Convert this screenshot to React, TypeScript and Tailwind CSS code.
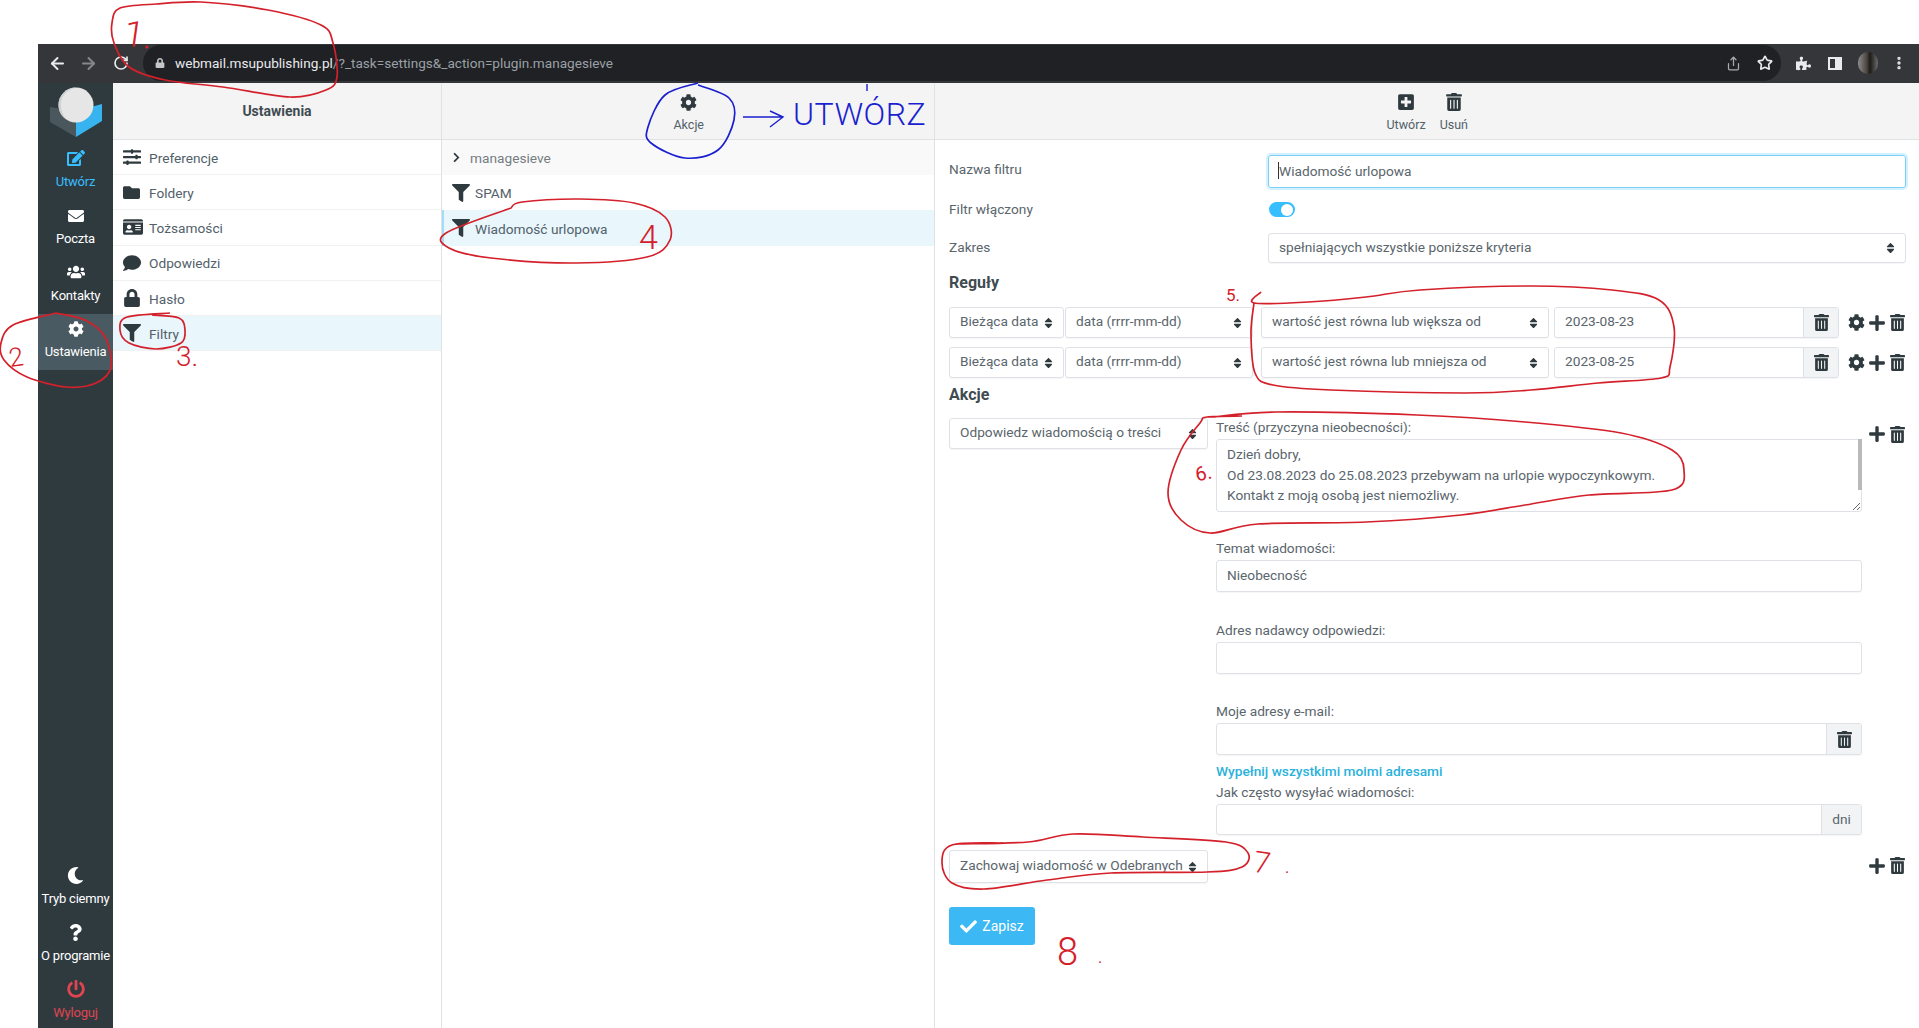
import React from 'react';
import { ArrowLeft, ArrowRight, RotateCw, Star, Share, EllipsisVertical } from 'lucide-react';
import {
  FaEdit, FaEnvelope, FaUsers, FaCog, FaMoon, FaQuestion, FaPowerOff, FaSlidersH, FaFolder, FaIdCard,
  FaComment, FaLock, FaFilter, FaChevronRight, FaPlusSquare, FaTrashAlt, FaPlus, FaCheck, FaSort, FaPuzzlePiece,
} from 'react-icons/fa';

type Pt = [number, number];

// smooth closed-ish pen stroke through hand picked points
const pen = (pts: Pt[]) => {
  let d = `M${pts[0][0]} ${pts[0][1]}`;
  for (let i = 0; i < pts.length - 1; i++) {
    const p0 = pts[Math.max(i - 1, 0)];
    const p1 = pts[i];
    const p2 = pts[i + 1];
    const p3 = pts[Math.min(i + 2, pts.length - 1)];
    d += ` C${p1[0] + (p2[0] - p0[0]) / 6} ${p1[1] + (p2[1] - p0[1]) / 6} ${p2[0] - (p3[0] - p1[0]) / 6} ${p2[1] - (p3[1] - p1[1]) / 6} ${p2[0]} ${p2[1]}`;
  }
  return d;
};

const redLoops: Pt[][] = [
  [[156, 4], [201, 2], [268, 10], [321, 25], [333, 43], [337, 77], [326, 90], [290, 97], [223, 87], [165, 80], [129, 67], [114, 43], [112, 23], [120, 8], [156, 4]],
  [[56, 313], [85, 320], [105, 337], [111, 367], [96, 383], [67, 387], [27, 377], [4, 360], [1, 343], [13, 325], [56, 313]],
  [[170, 313], [127, 317], [120, 330], [129, 343], [156, 349], [181, 343], [185, 330], [179, 318], [152, 315]],
  [[511, 208], [446, 233], [449, 248], [491, 258], [576, 263], [647, 257], [670, 240], [665, 217], [634, 203], [580, 199], [522, 202], [511, 208]],
  [[1261, 292], [1254, 303], [1308, 302], [1366, 297], [1420, 290], [1531, 286], [1612, 290], [1659, 300], [1674, 327], [1670, 367], [1661, 378], [1598, 383], [1531, 390], [1465, 393], [1331, 390], [1273, 385], [1255, 373], [1251, 333], [1254, 303]],
  [[1242, 416], [1207, 417], [1200, 423], [1181, 450], [1168, 493], [1181, 520], [1210, 533], [1258, 524], [1366, 522], [1461, 515], [1525, 505], [1589, 495], [1672, 490], [1684, 470], [1672, 450], [1621, 433], [1525, 422], [1417, 415], [1277, 412], [1213, 417]],
  [[1003, 843], [952, 845], [942, 863], [952, 883], [984, 889], [1047, 880], [1111, 873], [1207, 872], [1242, 867], [1248, 853], [1226, 842], [1143, 837], [1073, 834], [1028, 842], [958, 844]],
];

const blueCircle: Pt[] = [[698, 83], [665, 95], [648, 127], [651, 143], [685, 158], [718, 150], [734, 120], [729, 98], [698, 85]];

const Notes = () => (
  <div className="absolute inset-0 pointer-events-none">
    <svg width="1919" height="1028" className="absolute inset-0" fill="none">
      {redLoops.map((l, i) => (
        <path key={i} d={pen(l)} stroke="#d4202a" strokeWidth="1.7" />
      ))}
      <path d={pen(blueCircle)} stroke="#1a1fd0" strokeWidth="1.7" />
      <path d="M743 117H783M770 111L783 117L770 127M867 84V91" stroke="#1a1fd0" strokeWidth="1.4" />
    </svg>
    <span className="absolute left-[124px] top-[8px] text-[36px] font-light text-[#d4202a] rotate-[8deg]">1.</span>
    <span className="absolute left-[9px] top-[338px] text-[26px] font-light text-[#d4202a] rotate-[-8deg]">2</span>
    <span className="absolute left-[176px] top-[336px] text-[28px] font-light text-[#d4202a]">3.</span>
    <span className="absolute left-[639px] top-[212px] text-[34px] font-light text-[#d4202a]">4</span>
    <span className="absolute left-[1226px] top-[283px] text-[17px] text-[#d4202a]">5.</span>
    <span className="absolute left-[1195px] top-[458px] text-[20px] text-[#d4202a] rotate-[-12deg]">6.</span>
    <span className="absolute left-[1254px] top-[840px] text-[30px] font-light text-[#d4202a] rotate-[8deg]">7</span>
    <span className="absolute left-[1285px] top-[856px] text-[16px] text-[#d4202a]">.</span>
    <span className="absolute left-[1057px] top-[924px] text-[38px] font-light text-[#d4202a]">8</span>
    <span className="absolute left-[1098px] top-[946px] text-[16px] text-[#d4202a]">.</span>
    <span className="absolute left-[793px] top-[94px] text-[32px] leading-[40px] font-light tracking-[0.5px] text-[#1a1fd0]">UTWÓRZ</span>
  </div>
);

const Logo = () => (
  <svg width="52" height="51" viewBox="0 0 52 51">
    <path d="M0 20V35L26 50V24Z" fill="#4a585e" />
    <path d="M52 17V34L26 50V24Z" fill="#37b4f0" />
    <circle cx="26" cy="18" r="17.5" fill="#e6e6e6" />
    <path d="M26 .5A17.5 17.5 0 0 0 17 33C12 27 11 22 11 17C11 10 16 3 26 .5Z" fill="#cfd2d2" />
  </svg>
);

const NavItem = ({ icon, label, active, color, className = '' }: { icon: React.ReactNode; label: string; active?: boolean; color?: string; className?: string }) => (
  <div className={`h-[56.5px] pb-[2px] flex flex-col items-center justify-center gap-[7px] text-[13px] leading-[16px] tracking-[-0.2px] whitespace-nowrap ${active ? 'bg-[#4a5a62]' : ''} ${color ?? 'text-white'} ${className}`}>
    {icon}
    <span>{label}</span>
  </div>
);

const MenuRow = ({ icon, label, active }: { icon: React.ReactNode; label: string; active?: boolean }) => (
  <div className={`h-[35.2px] pl-[10px] flex items-center border-b border-[#f1f1f1] text-[13.7px] text-[#52616a] ${active ? 'bg-[#e9f6fc]' : ''}`}>
    <span className="w-[26px] flex text-[#2f3a3f]">{icon}</span>
    <span className="pt-[2px]">{label}</span>
  </div>
);

const ToolButton = ({ icon, label }: { icon: React.ReactNode; label: string }) => (
  <div className="mt-[3px] flex flex-col items-center gap-[6px] text-[12.5px] leading-[15px] text-[#52616a]">
    <span className="text-[#2f3a3f] flex h-[18px] items-center">{icon}</span>
    {label}
  </div>
);

const Select = ({ value, className, tall }: { value: string; className: string; tall?: boolean }) => (
  <div className={`relative shrink-0 ${tall ? 'h-[33px]' : 'h-[31px]'} ${className}`}>
    <select
      defaultValue={value}
      className="appearance-none w-full h-full bg-white border border-[#dee2e6] rounded-[3px] pl-[10px] pr-[20px] pb-[2px] text-[13.7px] text-[#5a656c] outline-none shadow-[0_1px_1px_rgba(0,0,0,0.04)]"
    >
      <option>{value}</option>
    </select>
    <FaSort className="absolute right-[9px] top-1/2 -translate-y-1/2 text-[#2f3a3f]" size={13} />
  </div>
);

const Trash = ({ size = 17 }: { size?: number }) => <FaTrashAlt size={size} className="text-[#2f3a3f]" />;

const Input = ({ value = '', addon, className = '' }: { value?: string; addon?: React.ReactNode; className?: string }) => (
  <div className={`flex h-[32px] border border-[#dee2e6] rounded-[3px] overflow-hidden bg-white shadow-[0_1px_1px_rgba(0,0,0,0.04)] ${className}`}>
    <input readOnly defaultValue={value} className="flex-1 min-w-0 px-[10px] pb-[2px] text-[13.7px] text-[#5a656c] outline-none" />
    {addon && (
      <span className="w-[35px] shrink-0 flex items-center justify-center bg-[#f1f3f5] border-l border-[#dee2e6] text-[13.7px] text-[#5a656c]">{addon}</span>
    )}
  </div>
);

const FieldLabel = ({ children, className = '' }: { children: React.ReactNode; className?: string }) => (
  <div className={`h-[16px] text-[13.7px] leading-[16px] text-[#5a656c] ${className}`}>{children}</div>
);

const RuleRow = ({ op, date, className }: { op: string; date: string; className: string }) => (
  <div className={`flex items-center ${className}`}>
    <Select value="Bieżąca data" className="w-[115px] mr-px" />
    <Select value="data (rrrr-mm-dd)" className="w-[188px] mr-[8px]" />
    <Select value={op} className="w-[288px] mr-[5px]" />
    <Input value={date} addon={<Trash />} className="w-[285px] shrink-0 !h-[31px]" />
    <div className="ml-auto flex items-center gap-[3px] text-[#2f3a3f]">
      <FaCog size={17} />
      <FaPlus size={18} />
      <Trash />
    </div>
  </div>
);

export default function App() {
  return (
    <div className="relative w-[1919px] h-[1028px] overflow-hidden bg-white pt-[44px] pl-[38px] font-[Roboto,sans-serif]">
      <div className="h-[39px] pr-[12px] pb-[1px] bg-[#35363a] flex items-center text-[#e8eaed]">
        <ArrowLeft size={19} strokeWidth={2.5} className="ml-[10px]" />
        <ArrowRight size={19} strokeWidth={2.5} className="ml-[12px] text-[#85878a]" />
        <RotateCw size={16} strokeWidth={2.5} className="ml-[15px]" />
        <div className="ml-[14px] flex-1 h-[36px] rounded-full bg-[#202124] flex items-center">
          <FaLock size={10} className="ml-[12px] text-[#c4c7ca]" />
          <span className="ml-[10px] text-[13.6px]">webmail.msupublishing.pl</span>
          <span className="text-[13.6px] text-[#9aa0a6]">/?_task=settings&amp;_action=plugin.managesieve</span>
          <Share size={15} className="ml-auto text-[#a8abae]" />
          <Star size={16} strokeWidth={2.5} className="ml-[16px] mr-[8px]" />
        </div>
        <FaPuzzlePiece size={15} className="ml-[15px]" />
        <span className="ml-[17px] w-[14px] h-[13px] border-2 border-[#e8eaed] border-r-[7px]" />
        <span className="ml-[16px] w-[20px] h-[22px] rounded-full bg-[linear-gradient(90deg,#8d8d8d,#4a423c_45%,#1d1a18_60%,#6b6b6b)]" />
        <EllipsisVertical size={16} strokeWidth={3} className="ml-[13px]" />
      </div>

      <div className="flex h-[945px]">
        <div className="w-[75px] shrink-0 bg-[#2f3a3f] flex flex-col">
          <div className="h-[59px] pt-[4px] flex justify-center"><Logo /></div>
          <NavItem icon={<FaEdit size={18} />} label="Utwórz" color="text-[#37beff]" className="mb-[2px]" />
          <NavItem icon={<FaEnvelope size={16} />} label="Poczta" />
          <NavItem icon={<FaUsers size={18} />} label="Kontakty" className="pb-[3px]" />
          <NavItem icon={<FaCog size={16} />} label="Ustawienia" active />
          <div className="mt-auto -mb-[2px]">
            <NavItem icon={<FaMoon size={17} />} label="Tryb ciemny" className="!h-[57px]" />
            <NavItem icon={<FaQuestion size={17} />} label="O programie" className="!h-[57px]" />
            <NavItem icon={<FaPowerOff size={18} />} label="Wyloguj" color="text-[#e0454f]" className="!h-[57px]" />
          </div>
        </div>

        <div className="w-[329px] shrink-0 border-r border-[#dfe2e4]">
          <div className="h-[57px] bg-[#f4f4f4] border-b border-[#dfe2e4] flex items-center justify-center text-[14px] font-bold text-[#3f4b51]">
            Ustawienia
          </div>
          <MenuRow icon={<FaSlidersH size={18} />} label="Preferencje" />
          <MenuRow icon={<FaFolder size={17} />} label="Foldery" />
          <MenuRow icon={<FaIdCard size={20} />} label="Tożsamości" />
          <MenuRow icon={<FaComment size={18} />} label="Odpowiedzi" />
          <MenuRow icon={<FaLock size={18} />} label="Hasło" />
          <MenuRow icon={<FaFilter size={18} />} label="Filtry" active />
        </div>

        <div className="w-[493px] shrink-0 border-r border-[#dfe2e4]">
          <div className="h-[57px] bg-[#f4f4f4] border-b border-[#dfe2e4] flex items-center justify-end pr-[230px]">
            <ToolButton icon={<FaCog size={17} />} label="Akcje" />
          </div>
          <div className="h-[35.2px] bg-[#f9f9f9] pl-[9px] flex items-center text-[13.7px] text-[#747d82]">
            <FaChevronRight size={11} className="text-[#2f3a3f] mr-[8px]" />
            <span className="pt-[2px]">managesieve</span>
          </div>
          <div className="h-[35.2px] pl-[10px] flex items-center text-[13.7px] text-[#52616a]">
            <FaFilter size={18} className="text-[#2f3a3f] mr-[5px]" />
            <span>SPAM</span>
          </div>
          <div className="h-[35.2px] pl-[8px] border-l-2 border-[#a5dcf5] bg-[#e9f6fc] flex items-center text-[13.7px] text-[#52616a]">
            <FaFilter size={18} className="text-[#2f3a3f] mr-[5px]" />
            <span className="pt-[2px]">Wiadomość urlopowa</span>
          </div>
        </div>

        <div className="flex-1 min-w-0">
          <div className="h-[57px] bg-[#f4f4f4] border-b border-[#dfe2e4] flex items-center justify-end pr-[451px] gap-[14px]">
            <ToolButton icon={<FaPlusSquare size={18} />} label="Utwórz" />
            <ToolButton icon={<Trash size={18} />} label="Usuń" />
          </div>

          <div className="pl-[14px] pr-[13px] text-[14px] text-[#5a656c]">
            <div className="mt-[15px] h-[33px] flex items-center">
              <FieldLabel className="w-[319px] -mt-[5px]">Nazwa filtru</FieldLabel>
              <div className="relative flex-1 h-full">
                <input readOnly defaultValue="Wiadomość urlopowa" className="w-full h-full px-[10px] pb-[2px] text-[13.7px] text-[#5a656c] border border-[#7cd0f5] rounded-[3px] outline-none shadow-[0_0_0_2px_rgba(55,190,255,0.22)]" />
                <span className="absolute left-[10px] top-[7px] w-px h-[17px] bg-[#333]" />
              </div>
            </div>
            <div className="mt-[14px] h-[15px] flex items-center">
              <FieldLabel className="w-[320px] -mt-[2px]">Filtr włączony</FieldLabel>
              <div className="w-[26px] h-[15px] rounded-full bg-[#37beff] flex items-center justify-end pr-[2px]">
                <span className="w-[12px] h-[12px] rounded-full bg-white" />
              </div>
            </div>
            <div className="mt-[16px] h-[30px] flex items-center">
              <FieldLabel className="w-[319px] -mt-[2px]">Zakres</FieldLabel>
              <Select value="spełniających wszystkie poniższe kryteria" className="flex-1 !h-[30px]" />
            </div>

            <div className="mt-[10px] h-[20px] text-[16px] leading-[20px] font-bold text-[#3f4b51]">Reguły</div>
            <RuleRow op="wartość jest równa lub większa od" date="2023-08-23" className="mt-[14px]" />
            <RuleRow op="wartość jest równa lub mniejsza od" date="2023-08-25" className="mt-[9px]" />
            <div className="mt-[7px] h-[20px] text-[16px] leading-[20px] font-bold text-[#3f4b51]">Akcje</div>

            <div className="mt-[13px] flex items-start">
              <Select value="Odpowiedz wiadomością o treści" className="w-[259px]" />
              <div className="ml-[8px] w-[646px] shrink-0 pt-[1px]">
                <FieldLabel>Treść (przyczyna nieobecności):</FieldLabel>
                <div className="relative mt-[4px] h-[73px]">
                  <textarea
                    readOnly
                    defaultValue={'Dzień dobry,\nOd 23.08.2023 do 25.08.2023 przebywam na urlopie wypoczynkowym.\nKontakt z moją osobą jest niemożliwy.\nw sprawach pilnych'}
                    className="block w-full h-full px-[10px] pt-[4px] text-[13.7px] leading-[20.5px] text-[#5a656c] border border-[#dee2e6] rounded-[3px] outline-none overflow-hidden"
                  />
                  <span className="absolute right-0 top-0 w-[4px] h-[51px] bg-[#b9b9b9]" />
                </div>
                <FieldLabel className="mt-[28px]">Temat wiadomości:</FieldLabel>
                <Input value="Nieobecność" className="mt-[4px]" />
                <FieldLabel className="mt-[30px]">Adres nadawcy odpowiedzi:</FieldLabel>
                <Input className="mt-[4px]" />
                <FieldLabel className="mt-[29px]">Moje adresy e-mail:</FieldLabel>
                <Input addon={<Trash />} className="mt-[4px]" />
                <div className="mt-[8px] h-[16px] text-[13.7px] leading-[16px] font-medium text-[#2ab2dc]">Wypełnij wszystkimi moimi adresami</div>
                <FieldLabel className="mt-[5px]">Jak często wysyłać wiadomości:</FieldLabel>
                <Input addon="dni" className="mt-[4px] !h-[31px] [&>span]:w-[40px]" />
              </div>
              <div className="ml-auto mt-[7px] flex items-center gap-[3px] text-[#2f3a3f]">
                <FaPlus size={18} />
                <Trash />
              </div>
            </div>

            <div className="mt-[15px] flex items-center">
              <Select value="Zachowaj wiadomość w Odebranych" className="w-[259px]" tall />
              <div className="ml-auto mb-[2px] flex items-center gap-[3px] text-[#2f3a3f]">
                <FaPlus size={18} />
                <Trash />
              </div>
            </div>

            <button className="mt-[24px] w-[86px] h-[38px] rounded-[3px] bg-[#3cb8f5] text-white text-[14px] flex items-center justify-center gap-[5px]">
              <FaCheck size={17} />
              Zapisz
            </button>
          </div>
        </div>
      </div>
      <Notes />
    </div>
  );
}
